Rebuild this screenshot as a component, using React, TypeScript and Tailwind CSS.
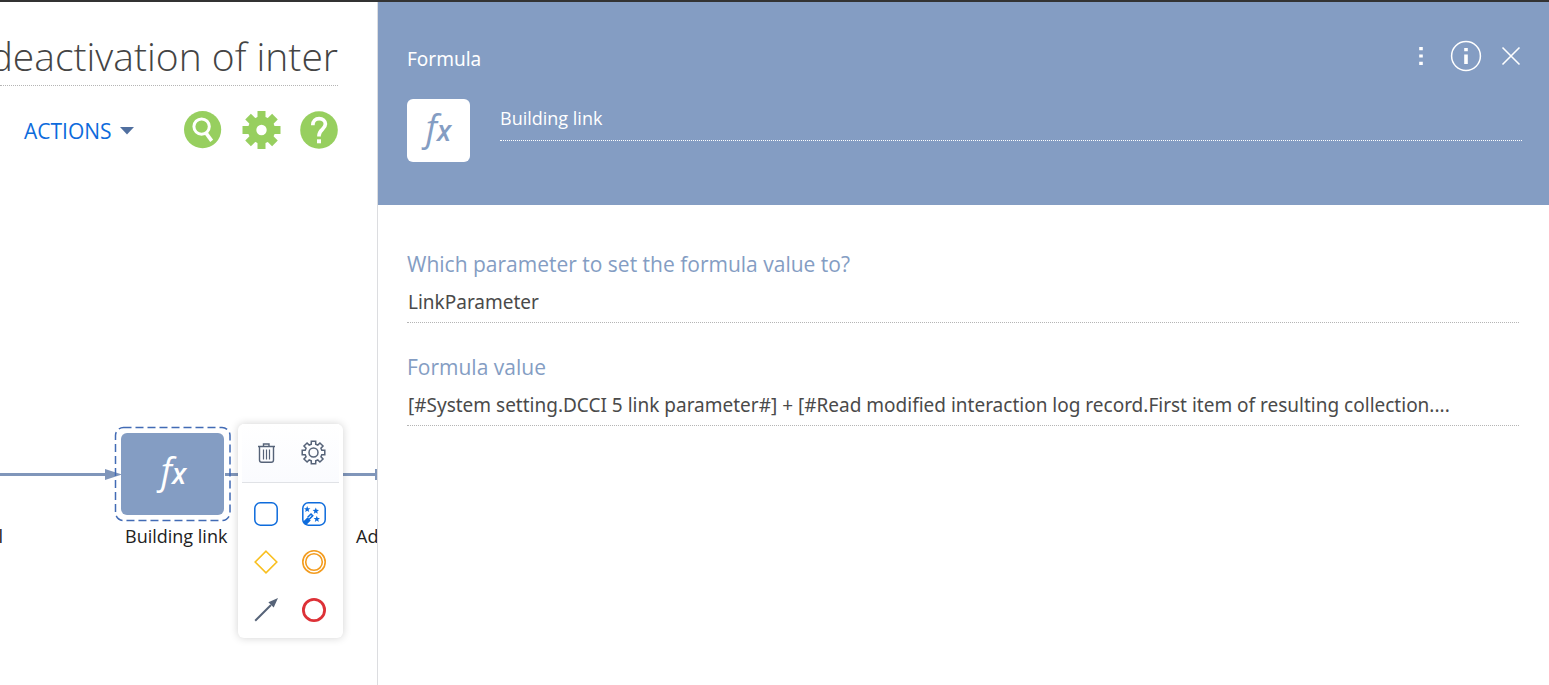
import React from "react";

function SearchIcon() {
  return (
    <svg viewBox="0 0 38 38" className="size-[38px]" aria-hidden="true">
      <circle cx="18.6" cy="18.6" r="18.6" fill="#97cf5f" />
      <circle cx="17.6" cy="15.6" r="7.7" fill="none" stroke="#fff" strokeWidth="3" />
      <path d="M21.9 21.9l5.8 8" stroke="#fff" strokeWidth="3.6" />
    </svg>
  );
}

function SettingsIcon() {
  return (
    <svg viewBox="0 0 38 38" className="size-[38px] overflow-visible" aria-hidden="true">
      <g fill="#97cf5f">
        <rect x="15.5" y="0" width="8" height="38" />
        <rect x="15.5" y="0" width="8" height="38" transform="rotate(45 19.5 19)" />
        <rect x="15.5" y="0" width="8" height="38" transform="rotate(90 19.5 19)" />
        <rect x="15.5" y="0" width="8" height="38" transform="rotate(135 19.5 19)" />
        <circle cx="19.5" cy="19" r="13.6" />
      </g>
      <circle cx="19.5" cy="19" r="5.2" fill="#fff" />
    </svg>
  );
}

function HelpIcon() {
  return (
    <svg viewBox="0 0 38 38" className="size-[38px]" aria-hidden="true">
      <circle cx="19" cy="19" r="18.8" fill="#97cf5f" />
      <path
        d="M12.8 14.2c0-4.4 2.8-6.6 6.3-6.6 3.6 0 6.3 2.1 6.3 5.5 0 5.2-6.4 5.4-6.4 11.5v.8"
        fill="none"
        stroke="#fff"
        strokeWidth="3.7"
      />
      <rect x="17" y="28.3" width="4" height="4" fill="#fff" />
    </svg>
  );
}

function TrashIcon() {
  return (
    <svg viewBox="0 0 24 24" className="size-6" fill="none" stroke="#566378" aria-hidden="true">
      <path d="M4 5.5h17M9.5 5.5V3H15v2.5M5.5 5.5V19q0 2.2 2.2 2.2h9.6q2.2 0 2.2-2.2V5.5" strokeWidth="1.4" />
      <path d="M9.5 8.5v10M12.5 8.5v10M15.5 8.5v10" strokeWidth="1.2" />
    </svg>
  );
}

const gearTeeth = Array.from({ length: 8 }, (_, i) => {
  const point = (radius: number, degrees: number) => {
    const a = ((degrees + i * 45 - 90) * Math.PI) / 180;
    return `${(11.5 + radius * Math.cos(a)).toFixed(2)} ${(11.5 + radius * Math.sin(a)).toFixed(2)}`;
  };
  return `${point(8.6, -15)} L${point(11.5, -11)} L${point(11.5, 11)} L${point(8.6, 15)}`;
});
const gearPath = `M${gearTeeth.join(" L")} Z`;

function GearOutlineIcon() {
  return (
    <svg viewBox="0 0 24 24" className="size-6 overflow-visible" fill="none" stroke="#566378" strokeWidth="1.5" aria-hidden="true">
      <path d={gearPath} />
      <circle cx="11.5" cy="11.5" r="4.5" />
    </svg>
  );
}

function TaskIcon() {
  return (
    <svg viewBox="0 0 24 24" className="size-6" aria-hidden="true">
      <rect x=".8" y=".8" width="22.4" height="22.4" rx="5.5" fill="none" stroke="#0d6bdc" strokeWidth="1.5" />
    </svg>
  );
}

const starPath = "M0-3.2l.9 2.2 2.3.1-1.8 1.5.6 2.3-2-1.3-2 1.3.6-2.3-1.8-1.5 2.3-.1z";

function WizardIcon() {
  return (
    <svg viewBox="0 0 24 24" className="size-6" aria-hidden="true">
      <rect x=".8" y=".8" width="22.4" height="22.4" rx="5.5" fill="none" stroke="#0d6bdc" strokeWidth="1.5" />
      <g fill="#0d6bdc">
        <path d={starPath} transform="translate(5.2 7.2)" />
        <path d={starPath} transform="translate(13.8 8.8)" />
        <path d={starPath} transform="translate(14.8 17)" />
        <path d="M1.2 19.5l4.5-4.3 3 3.3-4.4 4.5-2-1z" />
      </g>
      <path d="M5.7 15.2l3.3-3.2 1.7 1.7-3.5 3.5" fill="none" stroke="#0d6bdc" strokeWidth="1.6" />
    </svg>
  );
}

function GatewayIcon() {
  return (
    <svg viewBox="0 0 24 24" className="size-6" aria-hidden="true">
      <path d="M12 1.2L22.8 12 12 22.8 1.2 12z" fill="none" stroke="#f9bf1e" strokeWidth="1.6" />
    </svg>
  );
}

function IntermediateIcon() {
  return (
    <svg viewBox="0 0 24 24" className="size-6" fill="none" stroke="#f39c1f" strokeWidth="1.6" aria-hidden="true">
      <circle cx="12" cy="12" r="11.2" />
      <circle cx="12" cy="12" r="8.3" />
    </svg>
  );
}

function FlowIcon() {
  return (
    <svg viewBox="0 0 24 24" className="size-6" aria-hidden="true">
      <path d="M1.2 22.8L17 7" stroke="#566378" strokeWidth="2" />
      <path d="M24 0l-4.3 9.6-5.3-5.3z" fill="#566378" />
    </svg>
  );
}

function EndIcon() {
  return (
    <svg viewBox="0 0 24 24" className="size-6" aria-hidden="true">
      <circle cx="12" cy="12" r="10.6" fill="none" stroke="#dd3137" strokeWidth="2.8" />
    </svg>
  );
}

function IconButton({ label, children }: { label: string; children: React.ReactNode }) {
  return (
    <button type="button" aria-label={label} className="flex size-6 cursor-pointer items-center justify-center">
      {children}
    </button>
  );
}

function Fx() {
  return (
    <span className="pb-1.5 text-[36px] leading-none italic">
      f<span className="text-[28px] font-semibold">x</span>
    </span>
  );
}

function Field({ id, label, value }: { id: string; label: string; value: string }) {
  return (
    <div className="flex flex-col">
      <label htmlFor={id} className="text-[21px] leading-7 text-[#849dc3]">
        {label}
      </label>
      <input
        id={id}
        defaultValue={value}
        className="mt-1 h-[41px] w-full border-b border-dotted border-[#b5b5b5] bg-transparent pl-px font-['Noto_Sans',sans-serif] text-[19px] text-[#4a4a4a] outline-none"
      />
    </div>
  );
}

function Designer() {
  return (
    <section className="flex w-[378px] shrink-0 flex-col overflow-hidden border-r border-[#dcdde0]">
      <header className="flex flex-col">
        <div className="mr-[39px] flex h-[84px] items-end justify-end border-b border-dotted border-[#b5b5b5]">
          <input
            aria-label="Process title"
            defaultValue="deactivation of inter"
            className="h-14 w-[420px] shrink-0 bg-transparent pb-0.5 text-right text-[39px] font-light text-[#444] outline-none"
          />
        </div>
        <div className="mt-[25px] mr-[39px] flex h-[38px] items-center pl-6">
          <button type="button" className="flex cursor-pointer items-center gap-2 pt-0.5 text-[21px] leading-7 text-[#0d6bdc]">
            ACTIONS
            <svg viewBox="0 0 14 8" className="h-2 w-3.5" aria-hidden="true">
              <path d="M0 0h14L7 7.5z" fill="#506f9f" />
            </svg>
          </button>
          <div className="ml-auto flex items-center gap-5">
            <button type="button" aria-label="Search" className="cursor-pointer"><SearchIcon /></button>
            <button type="button" aria-label="Settings" className="cursor-pointer"><SettingsIcon /></button>
            <button type="button" aria-label="Help" className="cursor-pointer"><HelpIcon /></button>
          </div>
        </div>
      </header>

      <div className="relative min-h-[520px] flex-1 overflow-hidden text-[18px] text-[#222]">
        <svg className="absolute top-[260px] left-0" width="377" height="120" aria-hidden="true">
          <path d="M0 65.5h106M225 65.5h150" stroke="#8096ba" strokeWidth="3" />
          <path d="M105 60l17 5.5-17 5.5z" fill="#8096ba" />
          <path d="M375 60v11h2v-11z" fill="#8096ba" />
          <rect x="115.5" y="18.5" width="114.5" height="93" rx="8" fill="none" stroke="#426bb5" strokeWidth="1.5" strokeDasharray="8 4" />
        </svg>
        <span className="absolute top-[374px] right-[374px]">l</span>
        <button
          type="button"
          aria-label="Building link"
          className="absolute top-[284px] left-[121px] flex h-[82px] w-[103px] items-center justify-center rounded-md bg-[#849dc3] pl-0.5 text-white"
        >
          <Fx />
        </button>
        <span className="absolute top-[374px] left-[125px] whitespace-nowrap">Building link</span>
        <span className="absolute top-[374px] left-[356px] whitespace-nowrap">Ad</span>

        <div className="absolute top-[275px] left-[238px] w-[105px] rounded-md bg-white px-1 shadow-[0_0_8px_rgba(0,0,0,0.18)]">
          <div className="flex h-[59px] items-center gap-6 border-b border-[#e0e2e6] bg-linear-to-b from-white to-[#fafbfe] pl-3">
            <IconButton label="Delete"><TrashIcon /></IconButton>
            <IconButton label="Element settings"><GearOutlineIcon /></IconButton>
          </div>
          <div className="grid grid-cols-[24px_24px] gap-6 pt-[19px] pb-4 pl-3">
            <IconButton label="Add task"><TaskIcon /></IconButton>
            <IconButton label="Add system action"><WizardIcon /></IconButton>
            <IconButton label="Add gateway"><GatewayIcon /></IconButton>
            <IconButton label="Add intermediate event"><IntermediateIcon /></IconButton>
            <IconButton label="Add flow"><FlowIcon /></IconButton>
            <IconButton label="Add end event"><EndIcon /></IconButton>
          </div>
        </div>
      </div>
    </section>
  );
}

function PropertiesPanel() {
  return (
    <section className="flex min-w-0 flex-1 flex-col">
      <header className="h-[203px] bg-[#849dc3] pr-[27px] pl-[29px] text-white">
        <div className="flex h-[97px] items-start justify-between pt-[38px]">
          <h1 className="pt-[5px] font-['Noto_Sans',sans-serif] text-[19px] leading-7">Formula</h1>
          <div className="flex items-center pr-px">
            <button type="button" aria-label="More" className="mr-[26px] cursor-pointer">
              <svg viewBox="0 0 6 20" className="h-5 w-1.5" fill="#fff" aria-hidden="true">
                <path d="M1.2 1h3.6v3.2H1.2zM1.2 8.4h3.6v3.2H1.2zM1.2 15.8h3.6v3.2H1.2z" />
              </svg>
            </button>
            <button type="button" aria-label="Information" className="mr-[19px] cursor-pointer">
              <svg viewBox="0 0 32 32" className="size-8" aria-hidden="true">
                <circle cx="16" cy="16" r="14.4" fill="none" stroke="#fff" strokeWidth="1.5" />
                <path d="M14.2 8h3.6v3.2h-3.6zM14.2 14.5h3.6v9.5h-3.6z" fill="#fff" />
              </svg>
            </button>
            <button type="button" aria-label="Close" className="cursor-pointer">
              <svg viewBox="0 0 20 20" className="size-5" aria-hidden="true">
                <path d="M1.5 1.5l17 17M18.5 1.5l-17 17" stroke="#fff" strokeWidth="1.6" />
              </svg>
            </button>
          </div>
        </div>
        <div className="flex items-start">
          <div className="flex size-[63px] shrink-0 items-center justify-center rounded-md bg-white text-[#849dc3]">
            <Fx />
          </div>
          <input
            aria-label="Element name"
            defaultValue="Building link"
            className="ml-[30px] h-[42px] min-w-0 flex-1 border-b border-dotted border-white bg-transparent pb-1 text-[18px] outline-none"
          />
        </div>
      </header>
      <div className="flex flex-col gap-[30px] pt-[45px] pr-[30px] pl-[29px]">
        <Field id="parameter" label="Which parameter to set the formula value to?" value="LinkParameter" />
        <Field
          id="formula"
          label="Formula value"
          value="[#System setting.DCCI 5 link parameter#] + [#Read modified interaction log record.First item of resulting collection...."
        />
      </div>
    </section>
  );
}

export default function App() {
  return (
    <main className="flex h-screen flex-col overflow-hidden border-t-2 border-[#333] bg-white font-['Open_Sans','Noto_Sans',sans-serif]">
      <div className="flex min-h-0 flex-1">
        <Designer />
        <PropertiesPanel />
      </div>
    </main>
  );
}
